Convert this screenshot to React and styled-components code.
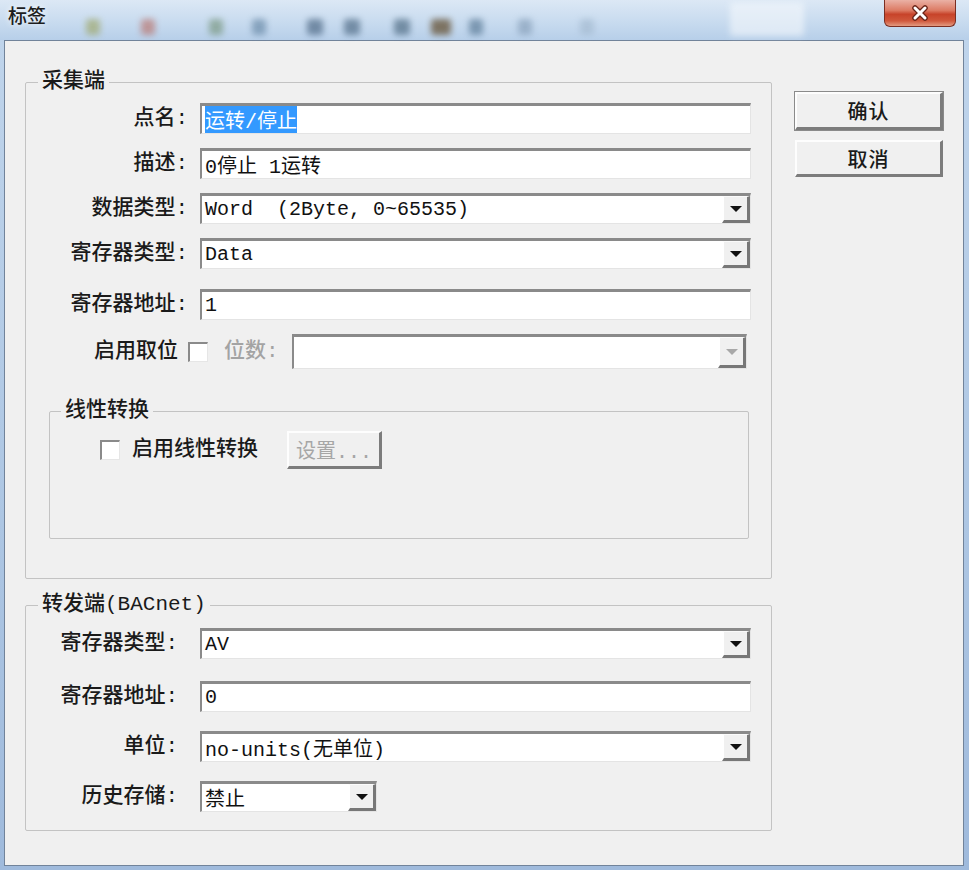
import React from "react";
import styled, { createGlobalStyle } from "styled-components";

const GlobalStyle = createGlobalStyle`
  html, body {
    margin: 0;
    padding: 0;
  }
  body {
    background: #b9cfe8;
    font-family: "Noto Sans CJK SC", sans-serif;
  }
`;

const MONO = `"Liberation Mono", "Noto Sans CJK SC", monospace`;

const Window = styled.div`
  width: 969px;
  height: 870px;
  display: flex;
  flex-direction: column;
  background: linear-gradient(180deg, #d6e4f3 0px, #bfd4eb 40px, #adc6e3 60%, #9fbadc 100%);
  overflow: hidden;
`;

const TitleBar = styled.div`
  position: relative;
  height: 40px;
  flex: 0 0 40px;
  display: flex;
  align-items: flex-start;
  padding-left: 8px;
  background: linear-gradient(180deg, #dce8f5 0%, #c8dbef 55%, #b7cfe9 100%);
`;

const Blob = styled.div`
  position: absolute;
  top: ${p => p.$y || 19}px;
  left: ${p => p.$x}px;
  width: ${p => p.$w || 14}px;
  height: ${p => p.$h || 16}px;
  background: ${p => p.$c};
  opacity: ${p => p.$o || 0.6};
  filter: blur(3px);
  border-radius: 3px;
`;

const Title = styled.div`
  position: relative;
  margin-top: 4px;
  font-size: 19px;
  line-height: 22px;
  font-weight: 500;
  color: #1d1d1d;
  text-shadow: 0 0 6px rgba(255, 255, 255, 0.95);
`;

const Spacer = styled.div`
  flex: 1;
`;

const CloseButton = styled.div`
  position: relative;
  width: 72px;
  height: 27px;
  margin-right: 13px;
  box-sizing: border-box;
  border: 1px solid #7a2e22;
  border-top: none;
  border-radius: 0 0 6px 6px;
  background: linear-gradient(180deg, #eab1a5 0%, #dc7a63 40%, #c7432a 55%, #d0583c 80%, #e39a80 100%);
  display: flex;
  align-items: center;
  justify-content: center;
`;

const Client = styled.div`
  flex: 1;
  margin: 0 5px 4px 4px;
  border: 1px solid #71839a;
  background: #f0f0f0;
  display: flex;
  padding: 0 20px;
`;

const LeftColumn = styled.div`
  width: 748px;
  display: flex;
  flex-direction: column;
  padding-top: 31px;
  gap: 16px;
`;

const Group = styled.fieldset`
  margin: ${p => p.$margin || "0"};
  padding: ${p => p.$padding};
  border: 1px solid #c3c3c3;
  border-radius: 2px;
  min-width: 0;
  box-sizing: border-box;
  height: ${p => (p.$height ? `${p.$height}px` : "auto")};
`;

const Legend = styled.legend`
  margin-left: ${p => p.$ml || 12}px;
  padding: 0 4px;
  font-family: ${MONO};
  font-size: 21px;
  line-height: 20px;
  font-weight: 500;
  color: #1a1a1a;
`;

const Rows = styled.div`
  display: flex;
  flex-direction: column;
  gap: ${p => p.$gap}px;
`;

const Row = styled.div`
  display: flex;
  align-items: center;
  height: ${p => p.$h || 31}px;
  margin-top: ${p => p.$mt || 0}px;
`;

const Label = styled.div`
  width: ${p => p.$w}px;
  margin-right: ${p => p.$gap}px;
  flex: 0 0 auto;
  text-align: right;
  white-space: nowrap;
  font-family: ${MONO};
  font-size: 21px;
  line-height: 24px;
  font-weight: 500;
  color: ${p => (p.$disabled ? "#a3a3a3" : "#1a1a1a")};
`;

const Field = styled.div`
  flex: ${p => (p.$width ? "0 0 auto" : "1")};
  width: ${p => (p.$width ? `${p.$width}px` : "auto")};
  margin-right: ${p => p.$mr || 0}px;
  height: 100%;
  box-sizing: border-box;
  display: flex;
  align-items: stretch;
  background: #fff;
  border-top: 3px solid #8a8a8a;
  border-left: 2px solid #8a8a8a;
  border-right: 1px solid #e4e4e4;
  border-bottom: 1px solid #e4e4e4;
`;

const FieldText = styled.div`
  flex: 1;
  display: flex;
  align-items: center;
  padding-left: 3px;
  font-family: ${MONO};
  font-size: 20px;
  color: #111;
  white-space: pre;
  overflow: hidden;
`;

const Selected = styled.span`
  background: #3399ff;
  color: #fff;
  padding: 1px 0 2px;
`;

const DropButton = styled.div`
  width: 28px;
  flex: 0 0 28px;
  box-sizing: border-box;
  background: #f0f0f0;
  border-top: 1px solid #fafafa;
  border-left: 2px solid #ffffff;
  border-right: 3px solid #777;
  border-bottom: 3px solid #777;
  display: flex;
  align-items: center;
  justify-content: center;
  &::after {
    content: "";
    border-left: 6px solid transparent;
    border-right: 6px solid transparent;
    border-top: 6px solid ${p => (p.$disabled ? "#a8a8a8" : "#111")};
    margin-top: 1px;
  }
`;

const Check = styled.div`
  width: 20px;
  height: 20px;
  flex: 0 0 20px;
  box-sizing: border-box;
  margin-left: ${p => p.$ml || 0}px;
  background: #fff;
  border-top: 2px solid #8a8a8a;
  border-left: 2px solid #8a8a8a;
  border-right: 1px solid #e6e6e6;
  border-bottom: 1px solid #e6e6e6;
`;

const InlineText = styled.div`
  margin-left: ${p => p.$ml || 0}px;
  margin-right: ${p => p.$mr || 0}px;
  font-family: ${MONO};
  font-size: 21px;
  line-height: 24px;
  font-weight: 500;
  white-space: nowrap;
  color: ${p => (p.$disabled ? "#a3a3a3" : "#1a1a1a")};
`;

const Button = styled.div`
  width: ${p => p.$w}px;
  height: ${p => p.$h}px;
  margin-left: ${p => p.$ml || 0}px;
  box-sizing: border-box;
  background: #f0f0f0;
  border-top: 2px solid #fdfdfd;
  border-left: 2px solid #fdfdfd;
  border-right: 3px solid #7c7c7c;
  border-bottom: 3px solid #7c7c7c;
  box-shadow: ${p => (p.$default ? "0 0 0 1px #8a8a8a" : "none")};
  display: flex;
  align-items: center;
  justify-content: center;
  font-family: ${MONO};
  font-size: 20px;
  font-weight: ${p => (p.$disabled ? 400 : 500)};
  letter-spacing: ${p => (p.$spaced ? "1px" : "0")};
  color: ${p => (p.$disabled ? "#a6a6a6" : "#1a1a1a")};
`;

const ButtonColumn = styled.div`
  display: flex;
  flex-direction: column;
  gap: 10px;
  margin-left: 23px;
  padding-top: 51px;
`;

const blobs = [
  { x: 86, c: "#9aa15a" },
  { x: 141, c: "#b86a60" },
  { x: 209, c: "#6f8f72" },
  { x: 252, c: "#5d7f9e" },
  { x: 307, c: "#3b5775", w: 16 },
  { x: 344, c: "#3e5b76", w: 16 },
  { x: 394, c: "#3d5b73", w: 16 },
  { x: 431, c: "#6b5a40", w: 20, o: 0.8 },
  { x: 469, c: "#4b6d8a" },
  { x: 518, c: "#7f98b3" },
  { x: 580, c: "#a0b6cc" },
  { x: 730, c: "#f4f8fc", w: 74, h: 34, y: 2, o: 0.6 },
];

const TextBox = ({ children, ...rest }) => (
  <Field {...rest}>
    <FieldText>{children}</FieldText>
  </Field>
);

const Combo = ({ children, disabled, ...rest }) => (
  <Field {...rest}>
    <FieldText>{children}</FieldText>
    <DropButton $disabled={disabled} />
  </Field>
);

const CloseIcon = () => (
  <svg width="22" height="16" viewBox="0 0 22 16">
    <path d="M6 3 L16 13 M16 3 L6 13" stroke="#6a2418" strokeWidth="5.5" strokeLinecap="round" />
    <path d="M6 3 L16 13 M16 3 L6 13" stroke="#ffffff" strokeWidth="3" strokeLinecap="round" />
  </svg>
);

export default function App() {
  return (
    <>
      <GlobalStyle />
      <Window>
        <TitleBar>
          {blobs.map(b => (
            <Blob key={b.x} $x={b.x} $c={b.c} $w={b.w} $h={b.h} $y={b.y} $o={b.o} />
          ))}
          <Title>标签</Title>
          <Spacer />
          <CloseButton>
            <CloseIcon />
          </CloseButton>
        </TitleBar>
        <Client>
          <LeftColumn>
            <Group $padding="11px 20px 39px 0">
              <Legend>采集端</Legend>
              <Rows $gap={14}>
                <Row>
                  <Label $w={162} $gap={12}>点名:</Label>
                  <TextBox>
                    <Selected>运转/停止</Selected>
                  </TextBox>
                </Row>
                <Row>
                  <Label $w={162} $gap={12}>描述:</Label>
                  <TextBox>0停止 1运转</TextBox>
                </Row>
                <Row>
                  <Label $w={162} $gap={12}>数据类型:</Label>
                  <Combo>Word  (2Byte, 0~65535)</Combo>
                </Row>
                <Row>
                  <Label $w={162} $gap={12}>寄存器类型:</Label>
                  <Combo>Data</Combo>
                </Row>
                <Row $mt={6}>
                  <Label $w={162} $gap={12}>寄存器地址:</Label>
                  <TextBox>1</TextBox>
                </Row>
                <Row $h={35}>
                  <Label $w={152} $gap={10}>启用取位</Label>
                  <Check />
                  <InlineText $ml={16} $mr={13} $disabled>位数:</InlineText>
                  <Combo disabled $mr={4}></Combo>
                </Row>
              </Rows>
              <Group $margin="32px 2px 0 23px" $padding="10px 0 0 0" $height={138}>
                <Legend $ml={11}>线性转换</Legend>
                <Row $h={38}>
                  <Check $ml={50} />
                  <InlineText $ml={12}>启用线性转换</InlineText>
                  <Button $w={95} $h={38} $ml={29} $disabled>设置...</Button>
                </Row>
              </Group>
            </Group>

            <Group $padding="13px 20px 18px 0">
              <Legend>转发端(BACnet)</Legend>
              <Rows $gap={19}>
                <Row>
                  <Label $w={152} $gap={22}>寄存器类型:</Label>
                  <Combo>AV</Combo>
                </Row>
                <Row $mt={3}>
                  <Label $w={152} $gap={22}>寄存器地址:</Label>
                  <TextBox>0</TextBox>
                </Row>
                <Row>
                  <Label $w={152} $gap={22}>单位:</Label>
                  <Combo>no-units(无单位)</Combo>
                </Row>
                <Row>
                  <Label $w={152} $gap={22}>历史存储:</Label>
                  <Combo $width={177}>禁止</Combo>
                </Row>
              </Rows>
            </Group>
          </LeftColumn>

          <ButtonColumn>
            <Button $w={148} $h={38} $default $spaced>确认</Button>
            <Button $w={148} $h={37} $spaced>取消</Button>
          </ButtonColumn>
        </Client>
      </Window>
    </>
  );
}
